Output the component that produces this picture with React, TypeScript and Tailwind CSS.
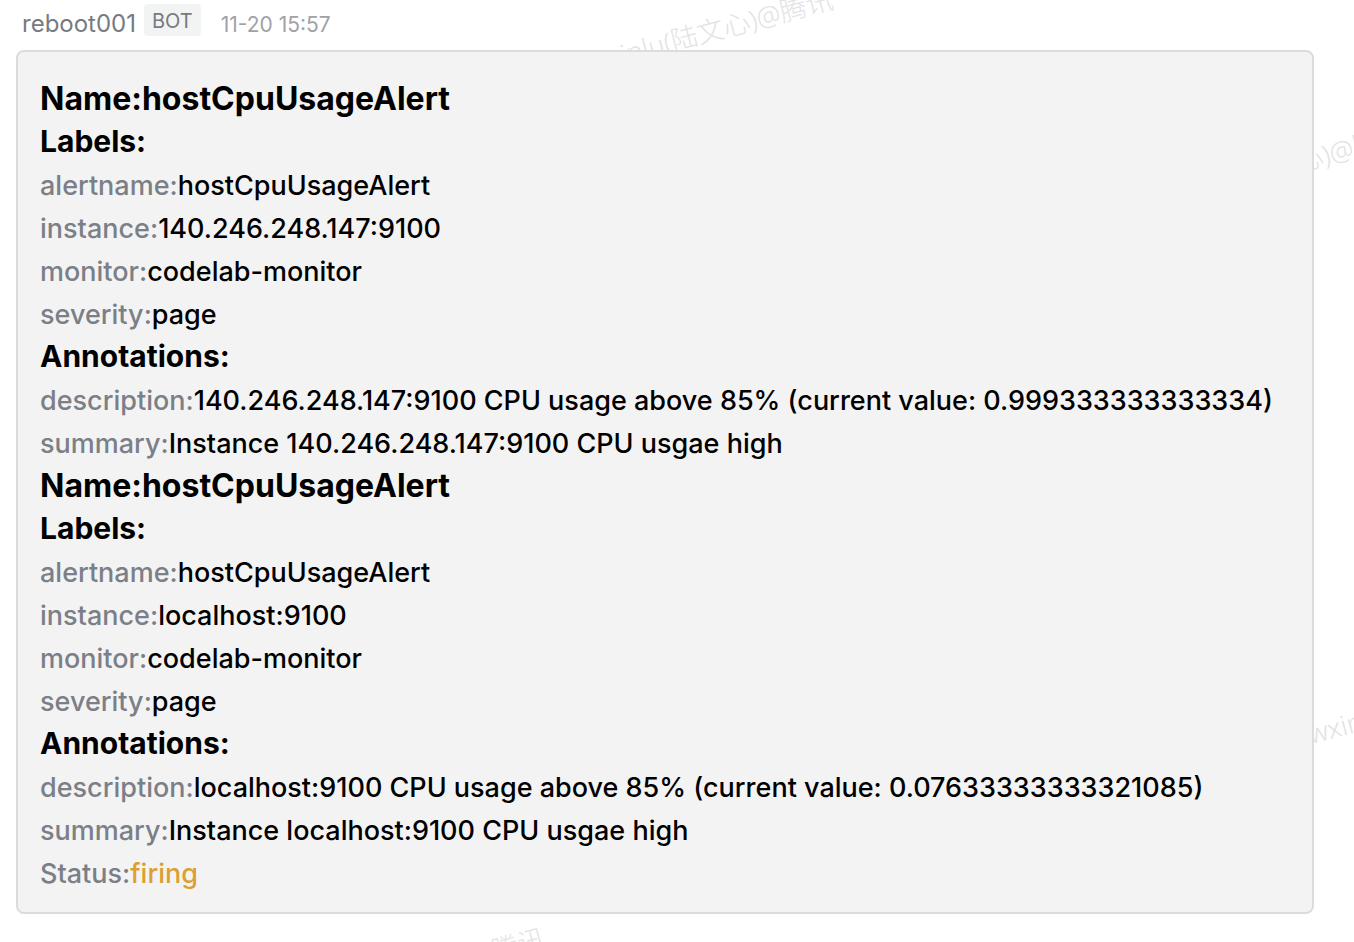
import React from "react";

type Row = { label: string; value: string };
type Alert = { name: string; labels: Row[]; annotations: Row[] };

const alerts: Alert[] = [
  {
    name: "hostCpuUsageAlert",
    labels: [
      { label: "alertname", value: "hostCpuUsageAlert" },
      { label: "instance", value: "140.246.248.147:9100" },
      { label: "monitor", value: "codelab-monitor" },
      { label: "severity", value: "page" },
    ],
    annotations: [
      {
        label: "description",
        value: "140.246.248.147:9100 CPU usage above 85% (current value: 0.999333333333334)",
      },
      { label: "summary", value: "Instance 140.246.248.147:9100 CPU usgae high" },
    ],
  },
  {
    name: "hostCpuUsageAlert",
    labels: [
      { label: "alertname", value: "hostCpuUsageAlert" },
      { label: "instance", value: "localhost:9100" },
      { label: "monitor", value: "codelab-monitor" },
      { label: "severity", value: "page" },
    ],
    annotations: [
      {
        label: "description",
        value: "localhost:9100 CPU usage above 85% (current value: 0.07633333333321085)",
      },
      { label: "summary", value: "Instance localhost:9100 CPU usgae high" },
    ],
  },
];

const watermarks = [
  "top-[15px] left-[584px]",
  "top-[150px] left-[1157px]",
  "top-[686px] left-[1304px]",
  "top-[954px] left-[296px]",
];

function Field({ label, value }: Row) {
  return (
    <p className="pt-0.5 text-[27px] leading-[41px] font-medium">
      <span className="text-[#7b7f87]">{label}:</span>
      {value}
    </p>
  );
}

function AlertBlock({ alert }: { alert: Alert }) {
  return (
    <section>
      <h2 className="text-[32px] leading-[43px] font-bold">Name:{alert.name}</h2>
      <h3 className="text-[30px] leading-[43px] font-bold">Labels:</h3>
      {alert.labels.map((row) => (
        <Field key={row.label} {...row} />
      ))}
      <h3 className="text-[30px] leading-[43px] font-bold">Annotations:</h3>
      {alert.annotations.map((row) => (
        <Field key={row.label} {...row} />
      ))}
    </section>
  );
}

export default function App() {
  return (
    <div className="relative min-h-screen overflow-hidden bg-white pr-10 pb-7 pl-4 font-[Inter,'Noto_Sans_CJK_SC',sans-serif] text-black">
      <div
        aria-hidden="true"
        className="absolute inset-0 overflow-hidden font-['Noto_Sans','Noto_Sans_CJK_SC',sans-serif] text-[27px] leading-8 font-light text-[#e2e3e5]"
      >
        {watermarks.map((place) => (
          <span key={place} className={`absolute -rotate-15 whitespace-nowrap ${place}`}>
            wxinlu(陆文心)@腾讯
          </span>
        ))}
      </div>
      <header className="relative flex h-[50px] items-start pl-[6px]">
        <span className="pt-2 text-[24px] leading-8 text-[#777a82]">reboot001</span>
        <span className="mt-1 ml-2 rounded bg-[#f2f3f3] px-2 text-[20px] leading-[34px] h-8 text-[#777a82]">BOT</span>
        <time className="ml-5 pt-2 text-[21px] leading-[34px] text-[#a0a2a7]">11-20 15:57</time>
      </header>
      <main className="relative rounded-lg border-2 border-[#dcdcdc] bg-[#f3f3f3] px-[22px] pt-[25px] pb-[18px]">
        {alerts.map((alert, i) => (
          <AlertBlock key={i} alert={alert} />
        ))}
        <p className="pt-0.5 text-[27px] leading-[41px] font-medium text-[#7b7f87]">
          Status:<span className="text-[#dba033]">firing</span>
        </p>
      </main>
    </div>
  );
}
